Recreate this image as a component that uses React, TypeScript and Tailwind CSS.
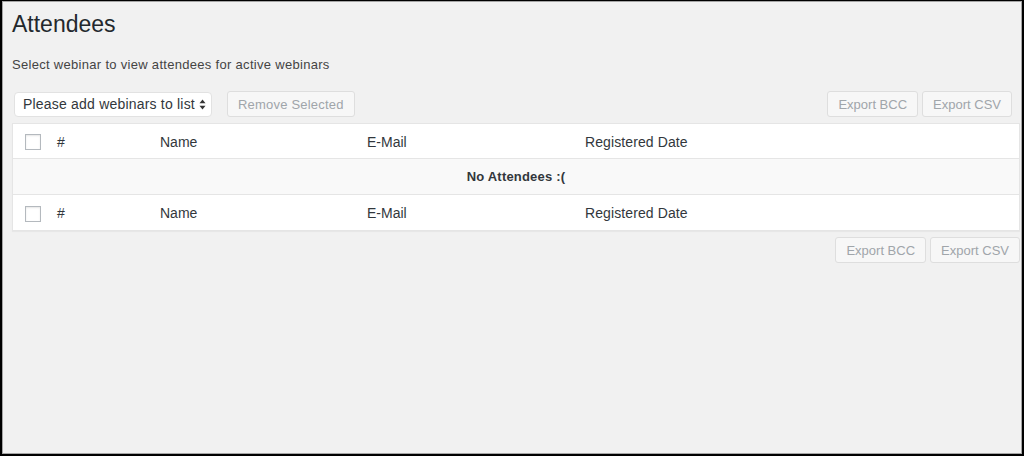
const font = { fontFamily: '"Liberation Sans", Arial, sans-serif' };

const Checkbox = () => (
  <span className="block w-4 h-4 bg-white border border-[#b4b9be] shadow-[inset_0_1px_2px_rgba(0,0,0,0.1)]" />
);

const DisabledButton = ({ label, className = '' }: { label: string; className?: string }) => (
  <button
    disabled
    className={`h-[26px] px-[10px] rounded-[3px] border border-[#dedede] bg-[#f7f7f7] text-[13px] text-[#a0a5aa] leading-none ${className}`}
  >
    {label}
  </button>
);

const HeaderRow = () => (
  <div className="flex items-center h-[35px] pt-[2px] bg-white text-[14px] text-[#32373c]">
    <div className="w-[44px] pl-3 flex items-center">
      <Checkbox />
    </div>
    <div className="w-[103px]">#</div>
    <div className="w-[207px]">Name</div>
    <div className="w-[218px]">E-Mail</div>
    <div className="flex-1 tracking-[0.1px]">Registered Date</div>
  </div>
);

export default function App() {
  return (
    <div className="h-screen bg-black pt-px px-[2px] pb-[2px]" style={font}>
      <div className="h-full bg-[#f1f1f1] border border-[#a5a5a5] pl-[9px] pr-px pt-2">
        <h1 className="text-[23px] leading-[28px] text-[#23282d]">Attendees</h1>
        <p className="mt-[18px] text-[13px] leading-[18px] tracking-[0.3px] text-[#444]">
          Select webinar to view attendees for active webinars
        </p>

        <div className="mt-[17px] flex items-center h-[26px]">
          <div className="ml-[2px] w-[198px] h-[25px] mt-px flex items-center justify-between bg-white border border-[#e2e2e2] rounded-[4px] pl-[8px] pr-[5px]">
            <span className="text-[14px] tracking-[0.2px] text-[#32373c] whitespace-nowrap overflow-hidden w-[172px]">
              Please add webinars to listi
            </span>
            <svg width="7" height="11" viewBox="0 0 7 11" className="shrink-0">
              <path d="M3.5 0.5 L6.5 4.3 L0.5 4.3 Z" fill="#333" />
              <path d="M3.5 10.5 L6.5 6.7 L0.5 6.7 Z" fill="#333" />
            </svg>
          </div>
          <DisabledButton label="Remove Selected" className="ml-[15px] tracking-[0.2px]" />
          <div className="ml-auto mr-2 flex gap-1">
            <DisabledButton label="Export BCC" />
            <DisabledButton label="Export CSV" />
          </div>
        </div>

        <div className="mt-[6px] border border-[#e5e5e5] divide-y divide-[#e5e5e5] shadow-[0_1px_1px_rgba(0,0,0,0.04)]">
          <HeaderRow />
          <div className="h-9 flex items-center justify-center bg-[#f9f9f9] text-[13px] font-bold tracking-[0.2px] text-[#32373c]">
            No Attendees :(
          </div>
          <HeaderRow />
        </div>

        <div className="mt-[6px] flex justify-end gap-1">
          <DisabledButton label="Export BCC" />
          <DisabledButton label="Export CSV" />
        </div>
      </div>
    </div>
  );
}
